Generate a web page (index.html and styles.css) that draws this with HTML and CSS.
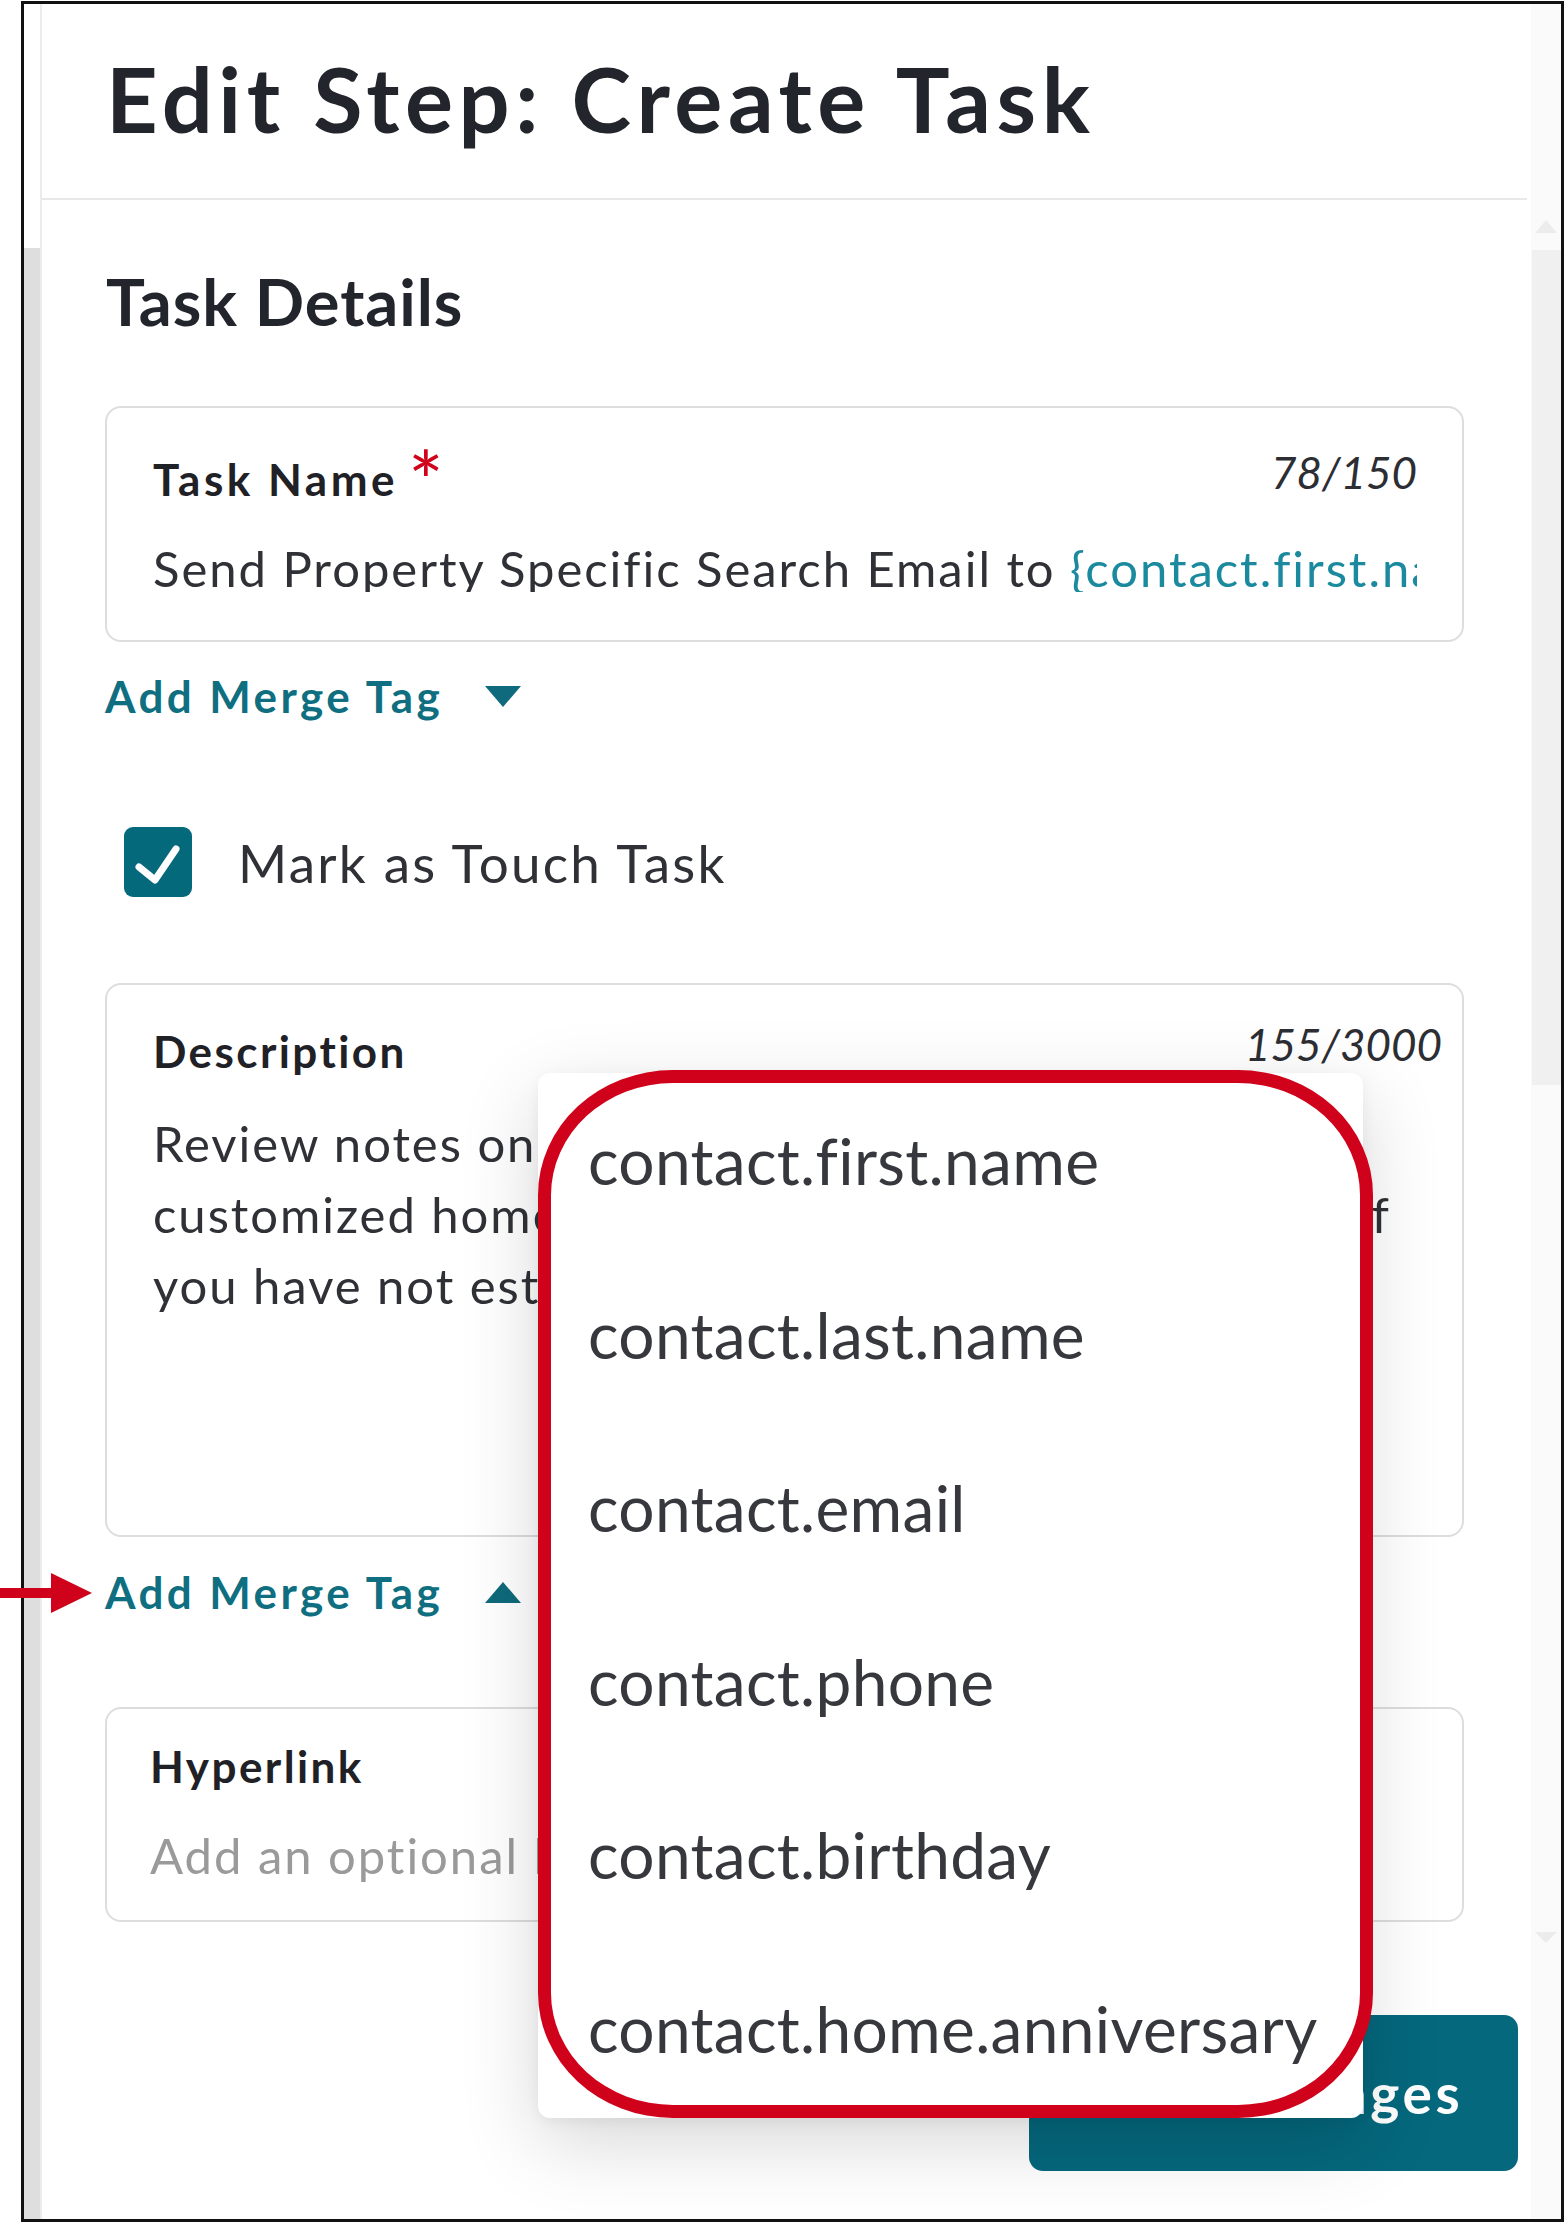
FILE: index.html
```html
<!DOCTYPE html>
<html lang="en">
<head>
<meta charset="utf-8">
<title>Edit Step: Create Task</title>
<link rel="stylesheet" href="styles.css">
</head>
<body>
<div class="frame">
  <div class="gutter"><div class="gutter-shade"></div></div>
  <div class="panel">
    <header class="header">
      <h1 class="title">Edit Step: Create Task</h1>
    </header>
    <main class="body">
      <h2 class="section-title">Task Details</h2>

      <div class="field field-name">
        <div class="field-head">
          <span class="field-label">Task Name<span class="req">*</span></span>
          <span class="counter">78/150</span>
        </div>
        <div class="field-value">Send Property Specific Search Email to <span class="tag">{contact.first.name}</span></div>
      </div>

      <div class="merge-link">
        <span>Add Merge Tag</span>
        <svg class="caret" width="36" height="21" viewBox="0 0 36 21"><polygon points="0,0 36,0 18,21" /></svg>
      </div>

      <label class="check-row">
        <span class="checkbox">
          <svg width="68" height="70" viewBox="0 0 68 70"><polyline points="15,40 31,53 52,22" fill="none" stroke="#fff" stroke-width="7" stroke-linecap="round" stroke-linejoin="round"/></svg>
        </span>
        <span class="check-label">Mark as Touch Task</span>
      </label>

      <div class="field field-desc">
        <div class="field-head">
          <span class="field-label">Description</span>
          <span class="counter counter-wide">155/3000</span>
        </div>
        <div class="desc-text">
          <span class="desc-line">Review notes on contact and send them a</span>
          <span class="desc-line desc-line-split"><span>customized home search email with listings.</span><span>If</span></span>
          <span class="desc-line">you have not established a search, create one.</span>
        </div>
      </div>

      <div class="merge-link merge-link-open">
        <span>Add Merge Tag</span>
        <svg class="caret" width="36" height="21" viewBox="0 0 36 21"><polygon points="0,21 36,21 18,0" /></svg>
      </div>

      <div class="field field-link">
        <span class="field-label">Hyperlink</span>
        <div class="placeholder">Add an optional link</div>
      </div>

      <div class="actions">
        <button class="btn-primary" type="button">Save Changes</button>
      </div>
    </main>
  </div>
  <div class="scrollbar">
    <div class="scroll-arrow scroll-up"></div>
    <div class="scroll-thumb"></div>
    <div class="scroll-track"></div>
    <div class="scroll-arrow scroll-down"></div>
  </div>

  <ul class="dropdown">
    <li>contact.first.name</li>
    <li>contact.last.name</li>
    <li>contact.email</li>
    <li>contact.phone</li>
    <li>contact.birthday</li>
    <li>contact.home.anniversary</li>
  </ul>
  <div class="highlight"></div>
  <svg class="pointer" width="92" height="40" viewBox="0 0 92 40">
    <rect x="0" y="15" width="53" height="10" fill="#d0021b"/>
    <polygon points="51,0 92,20 51,40" fill="#d0021b"/>
  </svg>
</div>
</body>
</html>
```

FILE: styles.css
```css
* { box-sizing: border-box; }

html, body {
  margin: 0;
  padding: 0;
  background: #ffffff;
}

body {
  font-family: Lato, "Noto Sans", sans-serif;
  color: #333333;
}

.frame {
  position: relative;
  display: flex;
  width: 1543px;
  height: 2221px;
  margin: 1px 0 0 21px;
  border: 3px solid #111111;
  background: #ffffff;
}

.gutter {
  width: 18px;
  flex: none;
  display: flex;
  flex-direction: column;
  border-right: 2px solid #ececec;
}

.gutter-shade {
  margin-top: 244px;
  flex: 1;
  background: #dedede;
}

.panel {
  flex: 1;
  min-width: 0;
  background: #ffffff;
}

.header {
  padding: 49px 0 55px 64px;
  margin-right: 4px;
  border-bottom: 2px solid #e8e8e8;
}

.title {
  margin: 0;
  font-size: 90px;
  line-height: 90px;
  font-weight: 700;
  letter-spacing: 0.062em;
  color: #23252c;
}

.body {
  padding: 0 67px 0 63px;
}

.section-title {
  margin: 69px 0 0 1px;
  font-size: 65px;
  line-height: 65px;
  font-weight: 700;
  letter-spacing: 0.015em;
  color: #23252c;
}

.field {
  border: 2px solid #dddddd;
  border-radius: 16px;
  background: #ffffff;
}

.field-name {
  margin-top: 72px;
  padding: 42px 45px 48px 46px;
}

.field-head {
  display: flex;
  justify-content: space-between;
  align-items: flex-start;
}

.field-label {
  margin-top: 7px;
  font-size: 44px;
  line-height: 44px;
  font-weight: 700;
  letter-spacing: 0.055em;
  color: #1f2126;
}

.field-name .field-label {
  letter-spacing: 0.08em;
}

.req {
  color: #d0021b;
  font-weight: 400;
  font-size: 84px;
  line-height: 0;
  letter-spacing: 0;
  margin-left: 10px;
  vertical-align: -16px;
}

.counter {
  font-size: 44px;
  line-height: 44px;
  font-style: italic;
  color: #2c2e33;
}

.counter-wide {
  margin-right: -25px;
}

.field-value {
  margin-top: 43px;
  font-size: 49px;
  line-height: 48px;
  letter-spacing: 0.04em;
  white-space: nowrap;
  overflow: hidden;
  color: #2f3136;
}

.tag {
  color: #1b8a9e;
}

.merge-link {
  display: flex;
  align-items: center;
  gap: 42px;
  margin-top: 32px;
  font-size: 44px;
  line-height: 44px;
  font-weight: 700;
  letter-spacing: 0.077em;
  color: #0f6f81;
}

.merge-link-open {
  margin-top: 33px;
}

.caret {
  fill: #0e6a7c;
  flex: none;
}

.check-row {
  display: flex;
  align-items: center;
  gap: 46px;
  margin: 109px 0 0 19px;
}

.checkbox {
  width: 68px;
  height: 70px;
  flex: none;
  border-radius: 9px;
  background: #05697c;
  display: block;
}

.checkbox svg {
  display: block;
}

.check-label {
  font-size: 53px;
  line-height: 53px;
  letter-spacing: 0.042em;
  color: #2f3136;
}

.field-desc {
  margin-top: 86px;
  height: 554px;
  padding: 37px 45px 0 46px;
}

.desc-text {
  margin-top: 35px;
  font-size: 49px;
  line-height: 71px;
  letter-spacing: 0.04em;
  color: #2f3136;
}

.desc-line {
  display: block;
  white-space: nowrap;
}

.desc-line-split {
  display: flex;
  justify-content: space-between;
  width: 1238px;
}

.field-link {
  margin-top: 93px;
  height: 215px;
  padding: 35px 45px 0 43px;
  display: flex;
  flex-direction: column;
}

.field-link .field-label {
  margin-top: 0;
}

.placeholder {
  margin-top: 43px;
  font-size: 49px;
  line-height: 49px;
  letter-spacing: 0.04em;
  color: #9a9a9a;
  white-space: nowrap;
}

.actions {
  display: flex;
  justify-content: flex-end;
  margin: 93px -54px 0 0;
}

.btn-primary {
  width: 489px;
  height: 156px;
  border: none;
  border-radius: 14px;
  background: #05687d;
  color: #ffffff;
  font-family: Lato, "Noto Sans", sans-serif;
  font-size: 55px;
  font-weight: 700;
  letter-spacing: 0.065em;
}

.scrollbar {
  width: 30px;
  flex: none;
  display: flex;
  flex-direction: column;
  align-items: stretch;
  background: #fafafa;
}

.scroll-arrow {
  width: 0;
  height: 0;
  align-self: center;
  border-left: 11px solid transparent;
  border-right: 11px solid transparent;
}

.scroll-up {
  margin-top: 216px;
  border-bottom: 13px solid #ececec;
}

.scroll-thumb {
  margin-top: 17px;
  height: 835px;
  margin-left: 1px;
  background: #f0f0f0;
}

.scroll-track {
  flex: none;
  height: 847px;
}

.scroll-down {
  border-top: 11px solid #ececec;
}

.dropdown {
  position: absolute;
  left: 514px;
  top: 1069px;
  width: 825px;
  height: 1045px;
  margin: 0;
  padding: 1px 0 0 50px;
  list-style: none;
  background: #ffffff;
  border-radius: 12px;
  box-shadow: 0 24px 80px rgba(0, 0, 0, 0.16), 0 4px 14px rgba(0, 0, 0, 0.05);
}

.dropdown li {
  height: 173.5px;
  line-height: 173.5px;
  font-size: 64px;
  letter-spacing: 0.005em;
  color: #36383d;
  white-space: nowrap;
}

.highlight {
  position: absolute;
  left: 514px;
  top: 1066px;
  width: 835px;
  height: 1048px;
  border: 13px solid #d0021b;
  border-radius: 135px / 125px;
  pointer-events: none;
}

.pointer {
  position: absolute;
  left: -24px;
  top: 1569px;
}
```
